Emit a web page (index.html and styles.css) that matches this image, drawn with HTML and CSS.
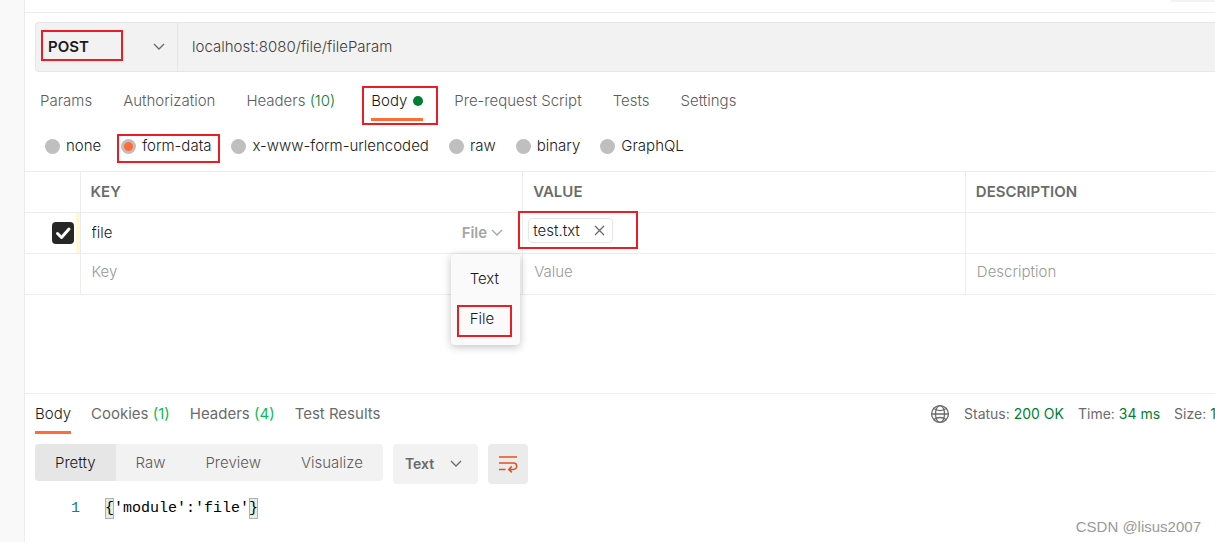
FILE: index.html
```html
<!DOCTYPE html>
<html lang="en">
<head>
<meta charset="utf-8">
<title>POST localhost:8080/file/fileParam</title>
<link rel="stylesheet" href="styles.css">
</head>
<body>
<div class="app">
  <aside class="sidebar"></aside>
  <main class="main">
    <div class="top-strip"><span class="top-button"></span></div>

    <section class="request">
      <div class="url-bar">
        <div class="method marked mark-method">
          <select class="method-select" aria-label="Method"><option>POST</option></select>
          <svg class="chevron" width="12" height="8" viewBox="0 0 12 8"><path d="M1 1l5 5 5-5"/></svg>
        </div>
        <input class="url-input" type="text" aria-label="Request URL" value="localhost:8080/file/fileParam">
      </div>

      <nav class="tabs">
        <button class="tab">Params</button>
        <button class="tab">Authorization</button>
        <button class="tab">Headers <span class="count">(10)</span></button>
        <button class="tab tab-active tab-body marked mark-body">Body<span class="dot"></span></button>
        <button class="tab">Pre-request Script</button>
        <button class="tab">Tests</button>
        <button class="tab">Settings</button>
      </nav>

      <div class="body-types">
        <label class="type"><input type="radio" name="type">none</label>
        <label class="type marked mark-form"><input type="radio" name="type" checked>form-data</label>
        <label class="type"><input type="radio" name="type">x-www-form-urlencoded</label>
        <label class="type"><input type="radio" name="type">raw</label>
        <label class="type"><input type="radio" name="type">binary</label>
        <label class="type"><input type="radio" name="type">GraphQL</label>
      </div>

      <table class="params">
        <colgroup><col class="col-check"><col class="col-key"><col class="col-value"><col></colgroup>
        <thead>
          <tr><th></th><th>KEY</th><th>VALUE</th><th>DESCRIPTION</th></tr>
        </thead>
        <tbody>
          <tr>
            <td class="check-cell">
              <label class="check-box"><input class="check" type="checkbox" aria-label="Enable file" checked><svg class="tick" width="22" height="22" viewBox="0 0 22 22"><path d="M5.500 11.500l4 4 7.500-8.500"/></svg></label>
            </td>
            <td>
              <div class="key-cell">
                <input class="cell-input" type="text" aria-label="Key" value="file">
                <div class="kind">
                  <button class="kind-button">File<svg class="chevron" width="12" height="8" viewBox="0 0 12 8"><path d="M1 1l5 5 5-5"/></svg></button>
                  <div class="menu">
                    <button class="menu-item">Text</button>
                    <button class="menu-item marked mark-file">File</button>
                  </div>
                </div>
              </div>
            </td>
            <td class="value-cell">
              <div class="marked mark-value">
                <span class="chip">test.txt<button class="chip-close" aria-label="Remove"><svg width="11" height="11" viewBox="0 0 11 11"><path d="M1 1l9 9M10 1l-9 9"/></svg></button></span>
              </div>
            </td>
            <td></td>
          </tr>
          <tr class="blank-row">
            <td></td>
            <td><input class="cell-input" type="text" aria-label="New key" placeholder="Key"></td>
            <td><input class="cell-input" type="text" aria-label="New value" placeholder="Value"></td>
            <td><input class="cell-input" type="text" aria-label="New description" placeholder="Description"></td>
          </tr>
        </tbody>
      </table>
    </section>

    <section class="response">
      <div class="response-head">
        <nav class="response-tabs">
          <button class="tab tab-active">Body</button>
          <button class="tab">Cookies <span class="count-light">(1)</span></button>
          <button class="tab">Headers <span class="count-light">(4)</span></button>
          <button class="tab">Test Results</button>
        </nav>
        <div class="status">
          <svg class="globe" width="20" height="20" viewBox="0 0 20 20"><circle cx="10" cy="10" r="8.4"/><ellipse cx="10" cy="10" rx="4.500" ry="8.4"/><path d="M3.800 4.500c3.600 2.700 8.800 2.700 12.400 0M3.800 15.500c3.600-2.700 8.800-2.700 12.400 0M1.600 10h16.800"/></svg>
          <span>Status: <b>200 OK</b></span>
          <span>Time: <b>34 ms</b></span>
          <span>Size: <b>1</b></span>
        </div>
      </div>

      <div class="toolbar">
        <div class="views">
          <button class="view view-active">Pretty</button>
          <button class="view">Raw</button>
          <button class="view">Preview</button>
          <button class="view">Visualize</button>
        </div>
        <div class="format">
          <select class="format-select" aria-label="Format"><option>Text</option></select>
          <svg class="chevron" width="12" height="8" viewBox="0 0 12 8"><path d="M1 1l5 5 5-5"/></svg>
        </div>
        <button class="wrap" aria-label="Wrap lines">
          <svg width="20" height="18" viewBox="0 0 20 18"><path d="M1 2h18M1 8h14.500a3.200 3.200 0 0 1 0 6.400H11M1 14.400h6.500M13.800 11.400l-3 3 3 3"/></svg>
        </button>
      </div>

      <div class="code"><span class="line-number">1</span><code><span class="brace">{</span>'module':'file'<span class="brace">}</span></code></div>
    </section>
  </main>
</div>
<div class="watermark">CSDN @lisus2007</div>
</body>
</html>
```

FILE: styles.css
```css
*, *::after { box-sizing: border-box; }

body {
  margin: 0;
  background: #fff;
  color: #1a1a1a;
  font: 300 15px/20px Inter, "Liberation Sans", sans-serif;
}

button, input, select {
  margin: 0;
  padding: 0;
  border: 0;
  border-radius: 0;
  background: none;
  color: inherit;
  font: inherit;
  appearance: none;
  outline: 0;
}

svg {
  flex: none;
  fill: none;
  stroke: #6b6b6b;
  stroke-width: 1.3;
}

.app { display: flex; min-height: 100vh; overflow: hidden; }

.sidebar {
  flex: none;
  width: 25px;
  background: #f9f9f9;
  border-right: 1px solid #ededed;
}

.main { flex: 1; min-width: 0; display: flex; flex-direction: column; }

.top-strip {
  display: flex;
  justify-content: flex-end;
  height: 13px;
  border-bottom: 1px solid #ededed;
}

.top-button { width: 45px; height: 2px; background: #f2f2f2; border-radius: 0 0 0 4px; }

.request { flex: 1; }

/* Red callout frames */
.marked { position: relative; }
.marked::after {
  content: "";
  position: absolute;
  border: 2px solid #ed1c24;
  pointer-events: none;
}
.mark-method::after { inset: 7px 54px 10px 5px; }
.mark-body::after { inset: -5px -15px -7px -9px; }
.mark-form::after { inset: -2px -9px -7px -4px; }
.mark-value::after { left: -5px; top: -2px; width: 120px; height: 38px; }
.mark-file::after { inset: 6px 8px 2px 6px; }

.url-bar {
  display: flex;
  height: 50px;
  margin: 9px 0 0 10px;
  background: #f2f2f2;
  border: 1px solid #e6e6e6;
  border-right: 0;
  border-radius: 4px 0 0 4px;
}

.method {
  display: flex;
  align-items: center;
  width: 142px;
  padding: 0 12px 0 12px;
  border-right: 1px solid #e6e6e6;
}

.method-select { flex: 1; font-weight: 600; }

.url-input { flex: 1; min-width: 0; padding: 0 14px; color: #404040; }

.tabs { display: flex; gap: 31px; padding: 19px 15px 0; }

.tab { height: 30px; padding-bottom: 10px; color: #5c5c5c; white-space: nowrap; }
.tab-active { color: #1a1a1a; border-bottom: 3px solid #ff6c37; padding-bottom: 7px; }
.tab-body { display: flex; align-items: center; gap: 6px; margin-left: 5px; }

.dot { width: 10px; height: 10px; border-radius: 50%; background: #007f31; }
.count { color: #007f31; }
.count-light { color: #0cbb52; font-weight: 400; }

.body-types { display: flex; gap: 20px; padding: 15px 20px 15px; }

.type { display: flex; align-items: center; gap: 6px; white-space: nowrap; }
.type input { width: 15px; height: 15px; border-radius: 50%; background: #bfbfbf; }
.type input:checked { background: radial-gradient(circle, #ff6c37 4px, #bfbfbf 5px); }

.params {
  width: 100%;
  table-layout: fixed;
  border-collapse: collapse;
}

.col-check { width: 55px; }
.col-key, .col-value { width: 37.2%; }

th, td {
  height: 41px;
  padding: 0 10px;
  border: 1px solid #ededed;
  border-width: 1px 1px 1px 0;
  text-align: left;
}
th { color: #6b6b6b; font-weight: 600; }
th:last-child, td:last-child { border-right: 0; }

.check-cell { padding: 0; background: linear-gradient(#fff8d6, #fff8d6) right / 4px 100% no-repeat; }

.check-box { display: block; position: relative; width: 22px; margin-left: 27px; }
.check {
  display: block;
  width: 22px;
  height: 22px;
  border-radius: 4px;
}
.check:checked { background: #262626; }
.tick {
  position: absolute;
  inset: 0;
  stroke: #fff;
  stroke-width: 3;
  stroke-linecap: round;
  stroke-linejoin: round;
}

.key-cell { display: flex; align-items: center; }
.cell-input { flex: 1; min-width: 0; width: 100%; padding-left: 1px; }
.cell-input::placeholder { color: #999; opacity: 1; }
.blank-row td { padding-bottom: 4px; }

.kind { position: relative; padding-right: 9px; }
.kind-button { display: flex; align-items: center; gap: 4px; color: #a6a6a6; font-weight: 600; }
.kind-button svg { stroke: #a6a6a6; }

.menu {
  position: absolute;
  z-index: 2;
  left: -11px;
  top: 31px;
  width: 69px;
  padding: 5px 0 6px;
  display: flex;
  flex-direction: column;
  background: #fafafa;
  border-radius: 4px;
  box-shadow: 0 2px 8px rgba(0, 0, 0, 0.24);
}
.menu-item { height: 40px; padding-left: 19px; text-align: left; }

.value-cell { padding: 0; }
.mark-value { display: flex; height: 40px; padding: 5px; }
.chip {
  display: flex;
  align-items: center;
  gap: 14px;
  height: 25px;
  padding: 0 7px 0 4px;
  border: 1px solid #e6e6e6;
  border-radius: 4px;
}
.chip-close { display: flex; }

.response { padding: 10px 0 22px 10px; border-top: 1px solid #ededed; }

.response-head { display: flex; justify-content: space-between; }
.response-tabs { display: flex; gap: 20px; }
.response-tabs .tab + .tab { font-weight: 400; color: #6b6b6b; }

.status {
  display: flex;
  gap: 14px;
  flex: none;
  width: 285px;
  font-size: 14px;
  font-weight: 400;
  color: #6b6b6b;
  white-space: nowrap;
}
.status b { color: #007f31; font-weight: inherit; }

.toolbar { display: flex; align-items: flex-start; gap: 10px; margin-top: 10px; }

.views { display: flex; border-radius: 4px; background: #f2f2f2; overflow: hidden; }
.view { height: 37px; padding: 0 20px; color: #5c5c5c; }
.view-active { background: #e6e6e6; color: #1a1a1a; }

.format {
  display: flex;
  align-items: center;
  width: 85px;
  height: 40px;
  padding: 0 16px 0 12px;
  border-radius: 4px;
  background: #f2f2f2;
}
.format-select { flex: 1; font-size: 14px; font-weight: 600; color: #6b6b6b; }

.wrap {
  display: flex;
  align-items: center;
  justify-content: center;
  width: 40px;
  height: 40px;
  border-radius: 4px;
  background: #ebebeb;
}
.wrap svg { stroke: #e05320; stroke-width: 1.5; }

.code {
  display: flex;
  gap: 25px;
  margin-top: 14px;
  font: 15px/22px "Liberation Mono", monospace;
  color: #000;
}
.code code { font: inherit; }
.line-number { width: 45px; text-align: right; color: #237893; }
.brace { background: #e4efe4; outline: 1px solid #b0b0b0; outline-offset: -1px; padding: 2px 0; }

.watermark {
  position: absolute;
  right: 14px;
  bottom: 5px;
  color: #999;
  font-size: 15px;
  font-family: "Liberation Sans", sans-serif;
}
```
